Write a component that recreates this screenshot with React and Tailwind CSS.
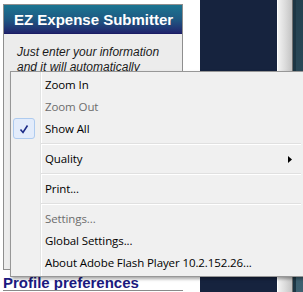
import React from "react";

function Item({ children, disabled, check, arrow }) {
  return (
    <div className="relative h-[22px] flex items-center pl-[32px]">
      {check && (
        <div className="absolute left-0 top-0 w-[22px] h-[21px] rounded-[3px] border border-[#aecbef] bg-[#e3ecfb] flex items-center justify-center">
          <svg width="12" height="12" viewBox="0 0 12 12">
            <path d="M2.5 6.5 L5 9.5 L9.5 2.5" fill="none" stroke="#1c2b87" strokeWidth="1.6" />
          </svg>
        </div>
      )}
      <span className={disabled ? "text-[#6d6d6d]" : "text-black"}>{children}</span>
      {arrow && (
        <svg className="absolute right-[11px] top-[8px]" width="4" height="7" viewBox="0 0 4 7">
          <path d="M0 0 L4 3.5 L0 7 Z" fill="#000" />
        </svg>
      )}
    </div>
  );
}

function Sep() {
  return (
    <div className="h-[8px] flex flex-col justify-center ml-[28px] mr-[2px]">
      <div className="h-px bg-[#e0e0e0]" />
      <div className="h-px bg-white" />
    </div>
  );
}

export default function App() {
  return (
    <div className="relative w-[303px] h-[292px] overflow-hidden bg-white" style={{ fontFamily: "'Liberation Sans', Arial, sans-serif" }}>
      <div className="flex h-full">
        {/* left column */}
        <div className="ml-[3px] w-[180px] flex flex-col">
          <div className="mt-[4px] h-[266px] border border-[#8e8e8e] bg-[#ececec] flex flex-col">
            <div className="h-[29px] bg-gradient-to-b from-[#1b7591] via-[#1e5a83] to-[#20246c] border-b border-[#1a1c64] flex items-center pl-[10px]">
              <span className="text-white font-bold text-[15px] leading-none">EZ Expense Submitter</span>
            </div>
            <div className="pl-[13px] pt-[11px] italic text-[12px] leading-[15px] text-[#1a1a1a]">
              <div>Just enter your information</div>
              <div>and it will automatically</div>
            </div>
          </div>
          <div className="mt-[6px] text-[15px] font-bold leading-[13px] text-[#1b1a80]">Profile preferences</div>
          <div className="mt-[1px] h-px bg-[#8a8a8a]" />
        </div>
        {/* right area */}
        <div className="ml-[17px] w-[77px] bg-[#16233e]" />
        <div className="w-px bg-white" />
        <div className="w-[14px] bg-gradient-to-r from-[#f2f2f2] via-[#dcdcdc] to-[#c4c4c4]" />
        <div className="w-px bg-[#6e6e6e]" />
        <div className="w-[3px] bg-[#1d3644]" />
        <div className="flex-1 bg-gradient-to-b from-[#23404f] to-[#3d6070]" />
      </div>

      {/* context menu */}
      <div
        className="absolute left-[10px] top-[71px] w-[296px] border border-[#979797] bg-[#f0f0f0] p-[2px] shadow-[2px_2px_3px_rgba(0,0,0,0.35)] text-[11.5px] tracking-[-0.1px]"
        style={{ fontFamily: "'Open Sans', 'Noto Sans', sans-serif" }}
      >
        <div className="absolute left-[29px] top-0 bottom-0 w-px bg-[#e2e3e3]" />
        <div className="absolute left-[30px] top-0 bottom-0 w-px bg-white" />
        <div className="relative">
          <Item>Zoom In</Item>
          <Item disabled>Zoom Out</Item>
          <Item check>Show All</Item>
          <Sep />
          <Item arrow>Quality</Item>
          <Sep />
          <Item>Print...</Item>
          <Sep />
          <Item disabled>Settings...</Item>
          <Item>Global Settings...</Item>
          <Item>About Adobe Flash Player 10.2.152.26...</Item>
        </div>
      </div>
    </div>
  );
}
